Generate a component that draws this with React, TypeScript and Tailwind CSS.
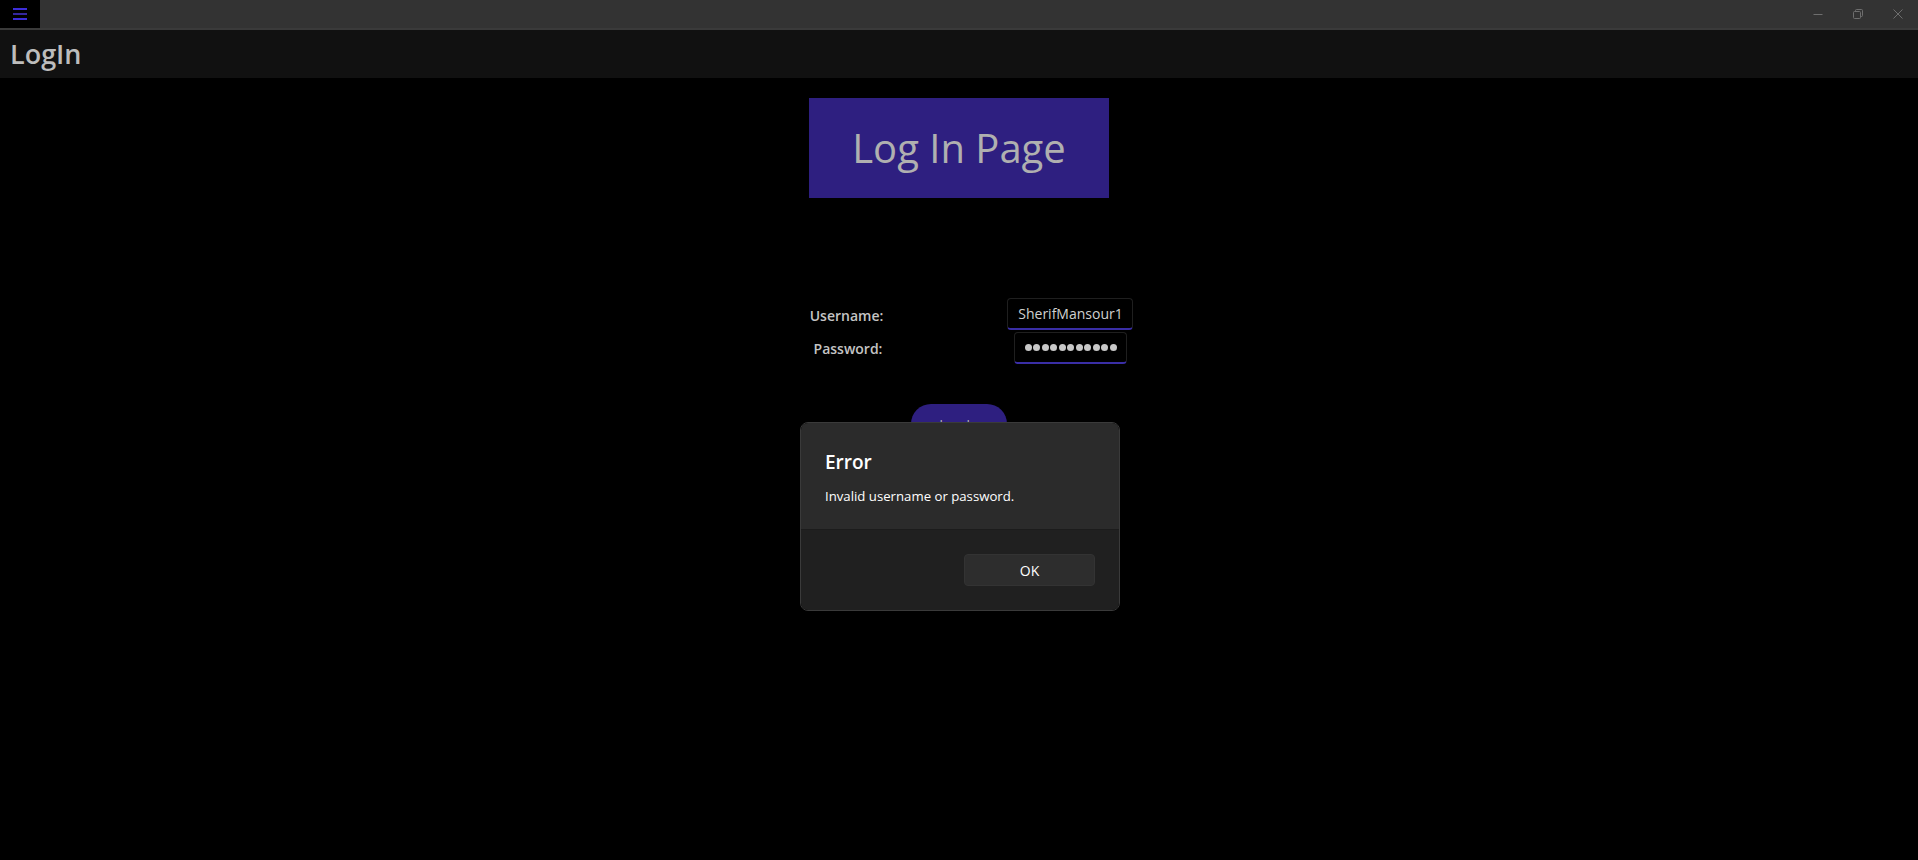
import React from 'react'

const font = { fontFamily: '"Open Sans", "Noto Sans", sans-serif' }

function TitleBar() {
  return (
    <div className="flex h-[30px] items-stretch bg-[#333333] border-b-2 border-[#3a3a3a]">
      {/* hamburger */}
      <div className="flex w-[40px] flex-col items-center justify-center gap-[3px] bg-black">
        <div className="h-[2px] w-[14px] bg-[#3d2ed8]" />
        <div className="h-[2px] w-[14px] bg-[#34279e]" />
        <div className="h-[2px] w-[14px] bg-[#3d2ed8]" />
      </div>
      <div className="flex-1" />
      {/* window controls */}
      <div className="flex items-center">
        <div className="flex w-[40px] justify-center">
          <svg width="10" height="10" viewBox="0 0 10 10">
            <path d="M0.5 5.5h9" stroke="#6e6e6e" strokeWidth="1" />
          </svg>
        </div>
        <div className="flex w-[40px] justify-center">
          <svg width="10" height="10" viewBox="0 0 10 10" fill="none">
            <rect x="0.5" y="2.5" width="7" height="7" rx="1" stroke="#6e6e6e" />
            <path d="M2.5 2.5v-1a1 1 0 0 1 1-1h5a1 1 0 0 1 1 1v5a1 1 0 0 1-1 1h-1" stroke="#6e6e6e" />
          </svg>
        </div>
        <div className="flex w-[40px] justify-center">
          <svg width="10" height="10" viewBox="0 0 10 10">
            <path d="M0.5 0.5l9 9M9.5 0.5l-9 9" stroke="#6e6e6e" strokeWidth="1" />
          </svg>
        </div>
      </div>
    </div>
  )
}

function TextBox({ children }: { children: React.ReactNode }) {
  return (
    <div className="flex h-[32px] items-center rounded-[4px] border border-[#1f1f1f] border-b-2 border-b-[#3a2ea6] pl-[10px] pr-[9px] text-[14px] text-[#d0d0d0]">
      {children}
    </div>
  )
}

export default function App() {
  return (
    <div className="relative h-[860px] w-full overflow-hidden bg-black" style={font}>
      <TitleBar />
      <div className="flex h-[48px] items-center bg-[#111111] pl-[10px]">
        <span className="text-[27px] font-semibold text-[#bdbdbd]">LogIn</span>
      </div>

      <div className="flex flex-col items-center">
        <div className="mt-[20px] flex h-[100px] w-[300px] items-center justify-center bg-[#2e1f80]">
          <span className="text-[40px] text-[#b0b0b0]">Log In Page</span>
        </div>

        <div className="mt-[100px] grid w-[444px] grid-cols-2 gap-y-[2px]">
          <div className="flex h-[32px] items-center justify-center pt-[3px] pr-[3px]">
            <span className="text-[14px] font-semibold text-[#c4c4c4]">Username:</span>
          </div>
          <div className="flex justify-center">
            <TextBox>SherifMansour1</TextBox>
          </div>
          <div className="flex h-[32px] items-center justify-center">
            <span className="text-[14px] font-semibold text-[#c4c4c4]">Password:</span>
          </div>
          <div className="flex justify-center">
            <TextBox>
              <div className="flex gap-[1.5px]">
                {Array.from({ length: 11 }).map((_, i) => (
                  <div key={i} className="h-[7px] w-[7px] rounded-full bg-[#c8c8c8]" />
                ))}
              </div>
            </TextBox>
          </div>
        </div>

        <button className="mt-[40px] h-[40px] w-[96px] rounded-full bg-[#2e1f80] text-[14px] text-[#b0b0b0]">
          Log In
        </button>
      </div>

      {/* error dialog */}
      <div className="absolute left-[800px] top-[422px] w-[320px] overflow-hidden rounded-[8px] border border-[#3a3a3a]">
        <div className="bg-[#2b2b2b] px-[24px] pt-[25px] pb-[23px]">
          <div className="text-[19px] font-semibold leading-[28px] text-white">Error</div>
          <div className="mt-[10px] text-[13.2px] leading-[20px] text-white">Invalid username or password.</div>
        </div>
        <div className="flex justify-end border-t border-[#1c1c1c] bg-[#202020] p-[24px]">
          <button className="h-[32px] w-[131px] rounded-[4px] border border-[#333333] bg-[#2d2d2d] text-[14px] text-white">
            OK
          </button>
        </div>
      </div>
    </div>
  )
}
